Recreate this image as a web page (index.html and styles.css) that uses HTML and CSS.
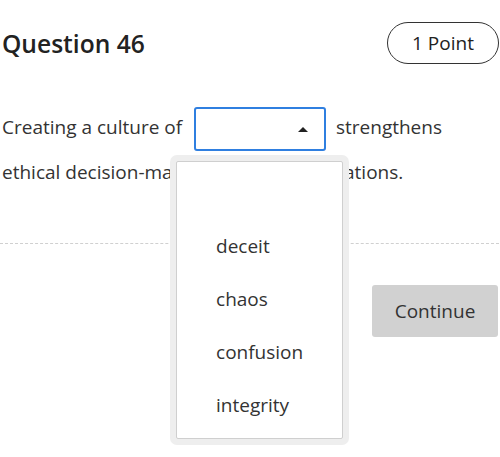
FILE: index.html
```html
<!DOCTYPE html>
<html>
<head>
<meta charset="utf-8">
<link rel="stylesheet" href="styles.css">
</head>
<body>
<div class="page">
  <div class="header">
    <h1 class="title">Question 46</h1>
    <div class="points">1 Point</div>
  </div>
  <p class="question">Creating a culture of <span class="select-wrap"><span class="select"><span class="arrow"></span></span><span class="menu"><span class="menu-inner"><span class="opt"></span><span class="opt">deceit</span><span class="opt">chaos</span><span class="opt">confusion</span><span class="opt">integrity</span></span></span></span> strengthens ethical decision-making&nbsp; within organizations.</p>
  <div class="divider"></div>
  <div class="actions">
    <button class="continue">Continue</button>
  </div>
</div>
</body>
</html>
```
FILE: styles.css
```css
html {
  margin: 0;
  padding: 0;
  background: #fff;
}
body {
  margin: 0;
  padding: 0;
  font-family: "Open Sans", "Noto Sans", sans-serif;
  color: #222;
}
.page {
  padding: 22px 1px 0 2px;
  min-height: 457px;
  box-sizing: border-box;
}
.header {
  display: flex;
  justify-content: space-between;
  align-items: center;
  height: 42px;
}
.title {
  margin: 0;
  font-size: 24.6px;
  font-weight: 600;
  color: #222;
}
.points {
  box-sizing: border-box;
  width: 112px;
  height: 42px;
  border: 1px solid #333;
  border-radius: 21px;
  display: flex;
  align-items: center;
  justify-content: center;
  font-size: 19px;
  font-weight: 500;
  color: #222;
}
.question {
  margin: 42px 0 0 0;
  font-size: 19px;
  line-height: 43px;
  color: #333;
}
.select-wrap {
  position: relative;
  display: inline-block;
  vertical-align: middle;
  margin: 0 5px 0 7px;
}
.select {
  display: block;
  box-sizing: border-box;
  width: 132px;
  height: 44px;
  border: 2px solid #2f7fe0;
  border-radius: 3px;
  position: relative;
  background: #fff;
}
.arrow {
  position: absolute;
  right: 16px;
  top: 18px;
  width: 0;
  height: 0;
  border-left: 5px solid transparent;
  border-right: 5px solid transparent;
  border-bottom: 5px solid #222;
}
.menu {
  position: absolute;
  left: -24px;
  top: 48px;
  width: 179px;
  box-sizing: border-box;
  padding: 6px;
  background: #eeeeee;
  border-radius: 7px;
  z-index: 5;
  line-height: 24px;
}
.menu-inner {
  display: flex;
  flex-direction: column;
  background: #fff;
  border: 1px solid #cfcfcf;
  border-radius: 2px;
  padding: 5px 0 6px 0;
}
.opt {
  display: flex;
  align-items: center;
  height: 53px;
  padding-left: 39px;
  font-size: 19px;
  line-height: 24px;
  color: #333;
}
.divider {
  margin-top: 49px;
  border-top: 1px dashed #d0d0d0;
  margin-left: -2px;
}
.actions {
  display: flex;
  justify-content: flex-end;
  margin-top: 41px;
}
.continue {
  width: 126px;
  height: 52px;
  border: none;
  border-radius: 3px;
  background: #d1d1d1;
  font-family: "Open Sans", "Noto Sans", sans-serif;
  font-size: 19px;
  color: #333;
  margin-right: 1px;
}
```
